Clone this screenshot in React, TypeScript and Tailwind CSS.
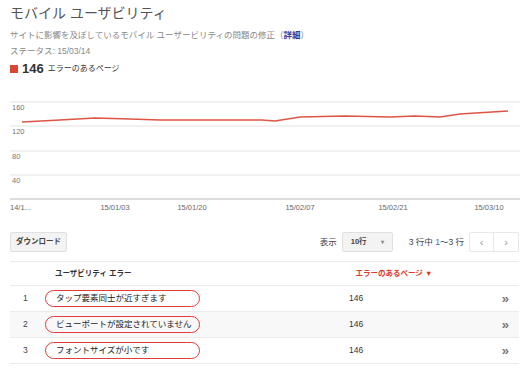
const font = { fontFamily: '"Liberation Sans", "Noto Sans CJK JP", sans-serif' };

const rows = [
  { n: 1, label: "タップ要素同士が近すぎます", count: 146 },
  { n: 2, label: "ビューポートが設定されていません", count: 146 },
  { n: 3, label: "フォントサイズが小です", count: 146 },
];

const xLabels = [
  { x: 10, t: "14/1...", anchor: "start" },
  { x: 115, t: "15/01/03", anchor: "middle" },
  { x: 192, t: "15/01/20", anchor: "middle" },
  { x: 300, t: "15/02/07", anchor: "middle" },
  { x: 393, t: "15/02/21", anchor: "middle" },
  { x: 489, t: "15/03/10", anchor: "middle" },
];

const yLines = [
  { y: 13, t: "160" },
  { y: 37, t: "120" },
  { y: 62, t: "80" },
  { y: 86, t: "40" },
];

const linePts =
  "22,33 60,31 95,29 130,30 160,31 200,31 230,31 262,31 275,32 300,28 345,27 390,28 415,27 440,28 460,25 508,22";

function Chart() {
  return (
    <svg width="529" height="124" className="block">
      {yLines.map((l) => (
        <g key={l.t}>
          <line x1="10" x2="520" y1={l.y} y2={l.y} stroke="#e4e4e4" strokeWidth="1.2" />
          <text x="12" y={l.y + 8} fontSize="7.5" fill="#777" style={font}>
            {l.t}
          </text>
        </g>
      ))}
      <line x1="10" x2="520" y1="110" y2="110" stroke="#bbb" strokeWidth="1.2" />
      <polyline points={linePts} fill="none" stroke="#dd5544" strokeWidth="1.4" />
      {xLabels.map((l) => (
        <text
          key={l.t}
          x={l.x}
          y="121"
          fontSize="7.5"
          fill="#666"
          textAnchor={l.anchor as "start" | "middle"}
          style={font}
        >
          {l.t}
        </text>
      ))}
    </svg>
  );
}

export default function App() {
  return (
    <div className="w-[529px] h-[368px] bg-white overflow-hidden text-[#333]" style={font}>
      <div className="px-[10px] pt-[3px]">
        <h1 className="text-[14px] leading-[20px] text-[#555]">モバイル ユーザビリティ</h1>
        <p className="mt-[6px] text-[8.5px] leading-[12px] text-[#888]">
          サイトに影響を及ぼしているモバイル ユーザービリティの問題の修正（
          <span className="text-[#3b3b9a] font-bold">詳細</span>）
        </p>
        <p className="mt-[4px] text-[8.5px] leading-[12px] text-[#888]">ステータス: 15/03/14</p>
        <div className="mt-[3px] flex items-center gap-[4px]">
          <span className="w-[8px] h-[8px] bg-[#dd4433]" />
          <span className="text-[13px] font-bold leading-[17px] text-[#333]">146</span>
          <span className="text-[8px] leading-[17px] text-[#333]">エラーのあるページ</span>
        </div>
      </div>

      <div className="mt-[12px]">
        <Chart />
      </div>

      <div className="mt-[19px] px-[10px] flex items-center h-[20px]">
        <button className="h-[20px] px-[5px] bg-[#f3f3f3] border border-[#e0e0e0] rounded-[2px] text-[7.5px] font-bold text-[#444]">
          ダウンロード
        </button>
        <div className="ml-auto flex items-center">
          <span className="text-[8.5px] text-[#444] mr-[5px]">表示</span>
          <div className="w-[51px] h-[20px] bg-[#f3f3f3] border border-[#e0e0e0] rounded-[2px] flex items-center px-[8px] text-[7.5px] font-bold text-[#444]">
            10行
            <span className="ml-auto text-[6px] text-[#888]">▾</span>
          </div>
          <span className="ml-[16px] text-[8.5px] text-[#444]">
            3 行中 <span className="text-[#3a6fb0]">1</span>～3 行
          </span>
          <div className="ml-[5px] flex h-[20px] border border-[#e8e8e8] rounded-[2px]">
            <span className="w-[24px] flex items-center justify-center text-[11px] text-[#999] border-r border-[#e8e8e8]">‹</span>
            <span className="w-[24px] flex items-center justify-center text-[11px] text-[#999]">›</span>
          </div>
        </div>
      </div>

      <div className="mt-[9px] mx-[10px] border-t border-[#ebebeb]">
        <div className="flex items-center h-[24px] border-b border-[#ebebeb] text-[7.5px] font-bold">
          <span className="w-[45px]" />
          <span className="text-[#333]">ユーザビリティ エラー</span>
          <span className="ml-[224px] text-[#dd3a2a]">エラーのあるページ ▼</span>
        </div>
        {rows.map((r) => (
          <div
            key={r.n}
            className={`flex items-center h-[26px] border-b border-[#ebebeb] ${r.n === 2 ? "bg-[#f8f8f8]" : "bg-white"}`}
          >
            <span className="w-[35px] pl-[13px] text-[8.5px] text-[#444]">{r.n}</span>
            <span className="w-[155px] h-[17px] border border-[#e03c3c] rounded-full flex items-center pl-[10px] text-[8.5px] text-[#222] whitespace-nowrap">
              {r.label}
            </span>
            <span className="ml-[149px] text-[8.5px] text-[#333]">{r.count}</span>
            <span className="ml-auto mr-[10px] text-[13px] font-bold leading-none text-[#777]">»</span>
          </div>
        ))}
      </div>
    </div>
  );
}
